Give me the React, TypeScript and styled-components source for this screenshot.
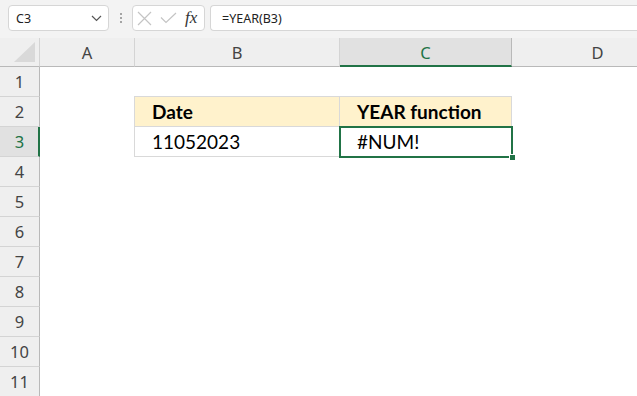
import React from "react";
import styled, { createGlobalStyle } from "styled-components";

const GlobalStyle = createGlobalStyle`
  html, body {
    margin: 0;
    padding: 0;
    background: #ffffff;
    overflow: hidden;
  }
  * { box-sizing: border-box; }
`;

const GREEN = "#217346";
const COLS = [
  { key: "A", width: 95 },
  { key: "B", width: 205 },
  { key: "C", width: 172 },
  { key: "D", width: 172 },
];
const ROWS = 11;
const SEL_COL = "C";
const SEL_ROW = 3;

const Page = styled.div`
  width: 637px;
  height: 396px;
  overflow: hidden;
  font-family: "Noto Sans", "Open Sans", sans-serif;
  background: #ffffff;
`;

const FormulaBar = styled.div`
  height: 38px;
  background: #f3f3f3;
  display: flex;
  align-items: flex-start;
  padding: 5px 0 0 8px;
`;

const NameBox = styled.div`
  width: 101px;
  height: 26px;
  background: #ffffff;
  border: 1px solid #d6d6d6;
  border-radius: 4px;
  display: flex;
  align-items: center;
  justify-content: space-between;
  padding: 0 6px 0 7px;
  font-size: 12.5px;
  color: #222;
`;

const Dots = styled.div`
  width: 23px;
  height: 26px;
  display: flex;
  flex-direction: column;
  align-items: center;
  justify-content: center;
  gap: 2px;
  span {
    width: 2px;
    height: 2px;
    background: #8a8a8a;
    border-radius: 1px;
  }
`;

const FxBox = styled.div`
  width: 73px;
  height: 26px;
  background: #ffffff;
  border: 1px solid #d6d6d6;
  border-radius: 4px;
  display: flex;
  align-items: center;
  padding: 0 0 0 4px;
  gap: 8px;
`;

const Fx = styled.span`
  font-family: "Liberation Serif", "DejaVu Serif", serif;
  font-style: italic;
  font-size: 17px;
  color: #333;
  margin-left: 0;
`;

const FormulaInput = styled.div`
  flex: 1;
  height: 26px;
  margin-left: 5px;
  background: #ffffff;
  border: 1px solid #d6d6d6;
  border-right: none;
  border-radius: 4px 0 0 4px;
  display: flex;
  align-items: center;
  padding-left: 11px;
  font-size: 12.5px;
  color: #222;
`;

const Grid = styled.div`
  display: grid;
  grid-template-columns: 40px ${COLS.map((c) => `${c.width}px`).join(" ")};
  grid-auto-rows: 30px;
  grid-template-rows: 29px;
`;

const Corner = styled.div`
  background: #efefef;
  border-right: 1px solid #d4d4d4;
  border-bottom: 1px solid #b9b9b9;
  display: flex;
  align-items: flex-end;
  justify-content: flex-end;
  padding: 0 4px 4px 0;
`;

const ColHeader = styled.div<{ $selected?: boolean }>`
  background: ${(p) => (p.$selected ? "#e1e1e1" : "#efefef")};
  border-right: 1px solid ${(p) => (p.$selected ? "#b9b9b9" : "#d4d4d4")};
  border-bottom: ${(p) => (p.$selected ? `2px solid ${GREEN}` : "1px solid #b9b9b9")};
  display: flex;
  align-items: center;
  justify-content: center;
  font-size: 16.5px;
  color: ${(p) => (p.$selected ? GREEN : "#444")};
  padding-top: ${(p) => (p.$selected ? "1px" : "0")};
`;

const RowHeader = styled.div<{ $selected?: boolean }>`
  background: ${(p) => (p.$selected ? "#e1e1e1" : "#efefef")};
  border-right: ${(p) => (p.$selected ? `2px solid ${GREEN}` : "1px solid #b9b9b9")};
  border-bottom: 1px solid #d4d4d4;
  display: flex;
  align-items: center;
  justify-content: center;
  font-size: 16.5px;
  color: ${(p) => (p.$selected ? GREEN : "#444")};
  padding-left: ${(p) => (p.$selected ? "1px" : "0")};
`;

const Cell = styled.div<{
  $fill?: string;
  $bold?: boolean;
  $top?: boolean;
  $left?: boolean;
  $boxed?: boolean;
}>`
  position: relative;
  background: ${(p) => p.$fill || "#ffffff"};
  border-right: 1px solid ${(p) => (p.$boxed ? "#d9d9d9" : "transparent")};
  border-bottom: 1px solid ${(p) => (p.$boxed ? "#d9d9d9" : "transparent")};
  border-top: ${(p) => (p.$top ? "1px solid #d9d9d9" : "none")};
  border-left: ${(p) => (p.$left ? "1px solid #d9d9d9" : "none")};
  margin-top: ${(p) => (p.$top ? "-1px" : "0")};
  margin-left: ${(p) => (p.$left ? "-1px" : "0")};
  display: flex;
  align-items: center;
  padding-left: 17px;
  font-family: "Lato", "Open Sans", sans-serif;
  font-size: 19px;
  font-weight: ${(p) => (p.$bold ? 700 : 400)};
  color: #000;
  white-space: nowrap;
`;

const Selection = styled.div`
  position: absolute;
  left: -1px;
  top: -1px;
  right: -2px;
  bottom: -2px;
  border: 2px solid ${GREEN};
  pointer-events: none;
  z-index: 2;
`;

const Handle = styled.div`
  position: absolute;
  right: -5px;
  bottom: -5px;
  width: 7px;
  height: 7px;
  background: ${GREEN};
  border: 1px solid #ffffff;
`;

type CellData = { text: string; bold?: boolean; fill?: string };

const data: Record<string, CellData> = {
  B2: { text: "Date", bold: true, fill: "#fff2cc" },
  C2: { text: "YEAR function", bold: true, fill: "#fff2cc" },
  B3: { text: "11052023" },
  C3: { text: "#NUM!" },
};

const Chevron = () => (
  <svg width="11" height="7" viewBox="0 0 11 7">
    <path d="M1 1 L5.5 5.5 L10 1" fill="none" stroke="#555" strokeWidth="1.2" />
  </svg>
);

const CrossIcon = () => (
  <svg width="15" height="15" viewBox="0 0 15 15">
    <path d="M1 1 L14 14 M14 1 L1 14" stroke="#c4c4c4" strokeWidth="1.2" />
  </svg>
);

const CheckIcon = () => (
  <svg width="17" height="12" viewBox="0 0 17 12">
    <path d="M1 5.5 L6 10.5 L16 1" fill="none" stroke="#c4c4c4" strokeWidth="1.2" />
  </svg>
);

const CornerTriangle = () => (
  <svg width="21" height="20" viewBox="0 0 21 20">
    <path d="M21 0 L21 20 L0 20 Z" fill="#d9d9d9" />
  </svg>
);

export default function App() {
  const rows = Array.from({ length: ROWS }, (_, i) => i + 1);
  return (
    <Page>
      <GlobalStyle />
      <FormulaBar>
        <NameBox>
          <span>C3</span>
          <Chevron />
        </NameBox>
        <Dots>
          <span />
          <span />
          <span />
        </Dots>
        <FxBox>
          <CrossIcon />
          <CheckIcon />
          <Fx>fx</Fx>
        </FxBox>
        <FormulaInput>=YEAR(B3)</FormulaInput>
      </FormulaBar>
      <Grid>
        <Corner>
          <CornerTriangle />
        </Corner>
        {COLS.map((c) => (
          <ColHeader key={c.key} $selected={c.key === SEL_COL}>
            {c.key}
          </ColHeader>
        ))}
        {rows.map((r) => (
          <React.Fragment key={r}>
            <RowHeader $selected={r === SEL_ROW}>{r}</RowHeader>
            {COLS.map((c) => {
              const id = `${c.key}${r}`;
              const d = data[id];
              const boxed = !!d;
              const selected = c.key === SEL_COL && r === SEL_ROW;
              return (
                <Cell
                  key={id}
                  $boxed={boxed}
                  $fill={d?.fill}
                  $bold={d?.bold}
                  $top={boxed && r === 2}
                  $left={boxed && c.key === "B"}
                  style={selected ? { zIndex: 2 } : undefined}
                >
                  {d?.text}
                  {selected && (
                    <Selection>
                      <Handle />
                    </Selection>
                  )}
                </Cell>
              );
            })}
          </React.Fragment>
        ))}
      </Grid>
    </Page>
  );
}
